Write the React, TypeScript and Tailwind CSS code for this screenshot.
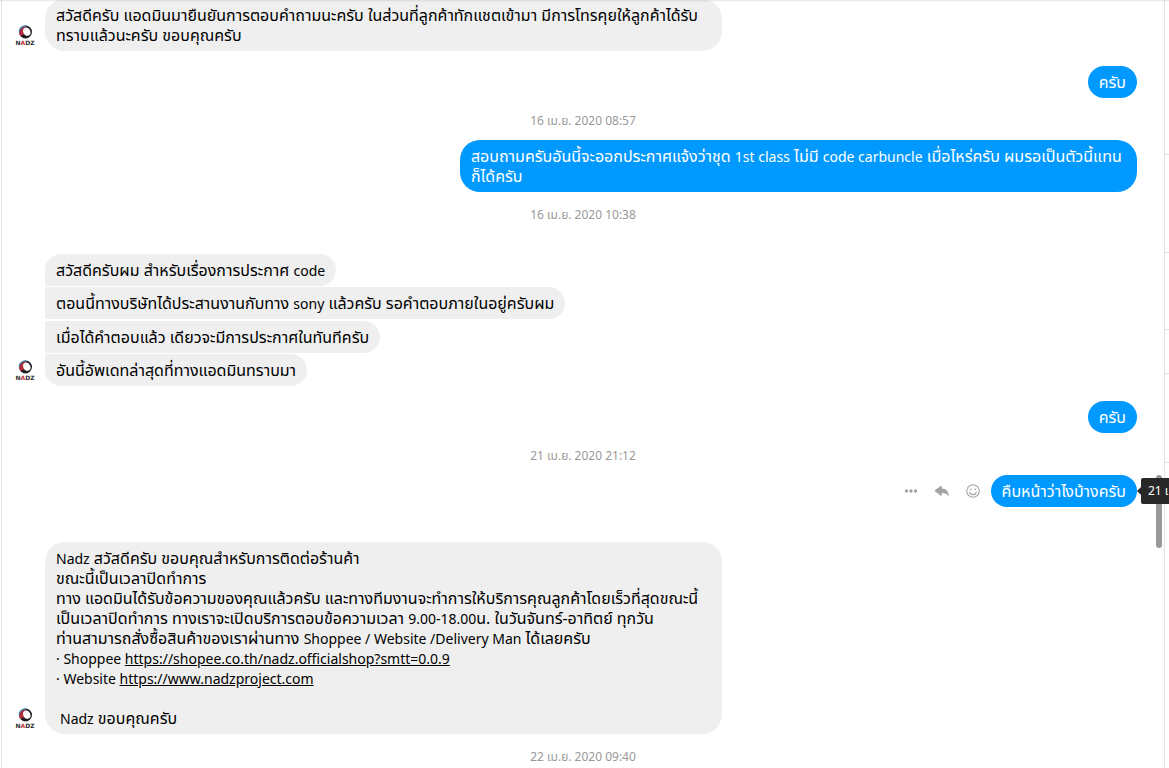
import type { ReactNode } from "react";
import clsx from "clsx";

function Avatar() {
    return (
        <div className="flex w-[43px] shrink-0 justify-center self-end pb-1 pl-[3px]" title="Nadz">
            <svg viewBox="0 0 28 28" className="size-7" role="img" aria-label="Nadz">
                <circle cx="14.5" cy="13" r="6.5" fill="#1d1d22" />
                <path d="M15.5 6.5A6.5 6.5 0 0 0 8 14.5L14.5 13z" fill="#3b7fa8" />
                <path d="M15 7.8A6 6 0 0 0 9.4 17L16 14z" fill="#b52b3a" />
                <ellipse cx="15.8" cy="12.7" rx="3.5" ry="4.3" transform="rotate(-25 15.8 12.7)" fill="#fff" />
                <text x="14" y="26" textAnchor="middle" fontSize="6" fontWeight="700" fontFamily="DejaVu Sans, sans-serif" fill="#2a2a2e">
                    N<tspan fill="#c5303c">A</tspan>DZ
                </text>
            </svg>
        </div>
    );
}

// Latin runs are set a size smaller than the Thai around them
function Latin({ children }: { children: ReactNode }) {
    return <span className="text-sm leading-none">{children}</span>;
}

function DateLine({ children }: { children: ReactNode }) {
    return <time className="-mr-[27px] block pt-4 pb-3 text-center text-xs leading-[14px] text-[#999]">{children}</time>;
}

function Received({ children }: { children: ReactNode }) {
    return (
        <div className="flex">
            <Avatar />
            <div className="flex min-w-0 grow flex-col items-start gap-px">{children}</div>
        </div>
    );
}

function Bubble({ children, className }: { children: ReactNode; className?: string }) {
    return <div className={clsx("bg-[#efefef] px-[11px] py-1.5 text-black", className)}>{children}</div>;
}

function Sent({ children, className }: { children: ReactNode; className?: string }) {
    return <div className={clsx("rounded-[20px] bg-[#0099ff] px-[11px] py-1.5 text-white", className)}>{children}</div>;
}

function Actions() {
    return (
        <div className="mr-2.5 flex items-center gap-[15px] text-[#a3a3a3]">
            <button type="button" aria-label="More" className="cursor-pointer">
                <svg viewBox="0 0 16 16" className="size-4" fill="currentColor">
                    <circle cx="3.5" cy="8" r="1.7" />
                    <circle cx="8" cy="8" r="1.7" />
                    <circle cx="12.5" cy="8" r="1.7" />
                </svg>
            </button>
            <button type="button" aria-label="Reply" className="cursor-pointer">
                <svg viewBox="0 0 16 16" className="size-4" fill="currentColor">
                    <path d="M.9 7.3 7 2.8c.4-.3.8 0 .8.4v2.2c4 .2 6.7 2.4 7 7.4 0 .4-.4.5-.6.2-1.4-2.1-3.3-2.9-6.4-2.9v2.3c0 .5-.5.7-.8.4L.9 8.3c-.3-.3-.3-.7 0-1z" />
                </svg>
            </button>
            <button type="button" aria-label="React" className="cursor-pointer">
                <svg viewBox="0 0 16 16" className="size-4" fill="none" stroke="currentColor" strokeWidth="1.1">
                    <circle cx="8" cy="8" r="6.3" />
                    <path d="M4.6 9.2c.6 1.7 1.9 2.4 3.4 2.4s2.8-.7 3.4-2.4" strokeLinecap="round" />
                    <circle cx="5.9" cy="6.3" r=".9" fill="currentColor" stroke="none" />
                    <circle cx="10.1" cy="6.3" r=".9" fill="currentColor" stroke="none" />
                </svg>
            </button>
        </div>
    );
}

function SidePanel() {
    return (
        <aside className="w-[5px] shrink-0 border-l border-[#e3e3e3]">
            <div className="h-[155px] border-b border-[#e3e3e3]" />
            <div className="h-[98px] border-b border-[#e3e3e3]" />
            <div className="h-[77px] border-b border-[#e3e3e3]" />
            <div className="h-11 border-b border-[#e3e3e3]" />
            <div className="h-[89px] border-b border-[#e3e3e3]" />
        </aside>
    );
}

export default function App() {
    return (
        <div className="relative flex min-h-screen overflow-hidden bg-white pl-px font-['Noto_Sans','Noto_Sans_Thai',sans-serif] text-base leading-5">
            <div className="absolute inset-x-0 top-0 h-0.5 bg-linear-to-b from-black/10 to-transparent" />

            <main className="min-w-0 grow border-l border-[#e3e3e3] pr-[27px]">
                <Received>
                    <Bubble className="-mt-px w-[62%] rounded-[20px]">
                        สวัสดีครับ แอดมินมายืนยันการตอบคำถามนะครับ ในส่วนที่ลูกค้าทักแชตเข้ามา มีการโทรคุยให้ลูกค้าได้รับ
                        <br />
                        ทราบแล้วนะครับ ขอบคุณครับ
                    </Bubble>
                </Received>

                <div className="mt-[15px] flex justify-end">
                    <Sent>ครับ</Sent>
                </div>

                <DateLine>16 เม.ย. 2020 08:57</DateLine>
                <div className="ml-[43px] flex justify-end">
                    <Sent className="w-[62%] whitespace-nowrap">
                        สอบถามครับอันนี้จะออกประกาศแจ้งว่าชุด <Latin>1st class</Latin> ไม่มี <Latin>code carbuncle</Latin>{" "}
                        เมื่อไหร่ครับ ผมรอเป็นตัวนี้แทน
                        <br />
                        ก็ได้ครับ
                    </Sent>
                </div>

                <DateLine>16 เม.ย. 2020 10:38</DateLine>
                <div className="pt-5">
                    <Received>
                        <Bubble className="rounded-[20px] rounded-bl-xs">
                            สวัสดีครับผม สำหรับเรื่องการประกาศ <Latin>code</Latin>
                        </Bubble>
                        <Bubble className="rounded-r-[20px] rounded-l-xs">
                            ตอนนี้ทางบริษัทได้ประสานงานกับทาง <Latin>sony</Latin> แล้วครับ รอคำตอบภายในอยู่ครับผม
                        </Bubble>
                        <Bubble className="mt-px rounded-r-[20px] rounded-l-xs">เมื่อได้คำตอบแล้ว เดียวจะมีการประกาศในทันทีครับ</Bubble>
                        <Bubble className="rounded-[20px] rounded-tl-xs">อันนี้อัพเดทล่าสุดที่ทางแอดมินทราบมา</Bubble>
                    </Received>
                </div>

                <div className="mt-[15px] flex justify-end">
                    <Sent>ครับ</Sent>
                </div>

                <DateLine>21 เม.ย. 2020 21:12</DateLine>
                <div className="relative flex justify-end">
                    <Actions />
                    <Sent>คืบหน้าว่าไงบ้างครับ</Sent>
                    <div className="absolute top-0 left-full ml-[19px] h-[73px] w-1.5 rounded-full bg-[#999]" />
                    <div
                        role="tooltip"
                        className="absolute top-[3px] left-full ml-1 rounded-xs bg-[#282828] px-[7px] py-[3px] text-xs leading-5 whitespace-nowrap text-white"
                    >
                        <span className="absolute top-[9px] -left-1 border-y-4 border-r-4 border-y-transparent border-r-[#282828]" />
                        21 เม.ย. 2020 21:12
                    </div>
                </div>

                <div className="pt-[35px]">
                    <Received>
                        <Bubble className="w-[62%] rounded-[20px]">
                            <p>
                                <Latin>Nadz</Latin> สวัสดีครับ ขอบคุณสำหรับการติดต่อร้านค้า
                            </p>
                            <p>ขณะนี้เป็นเวลาปิดทำการ</p>
                            <p>ทาง แอดมินได้รับข้อความของคุณแล้วครับ และทางทีมงานจะทำการให้บริการคุณลูกค้าโดยเร็วที่สุดขณะนี้</p>
                            <p>
                                เป็นเวลาปิดทำการ ทางเราจะเปิดบริการตอบข้อความเวลา <Latin>9.00-18.00</Latin>น. ในวันจันทร์-อาทิตย์ ทุกวัน
                            </p>
                            <p>
                                ท่านสามารถสั่งซื้อสินค้าของเราผ่านทาง <Latin>Shoppee / Website /Delivery Man</Latin> ได้เลยครับ
                            </p>
                            <p>
                                <Latin>
                                    · Shoppee{" "}
                                    <a href="https://shopee.co.th/nadz.officialshop?smtt=0.0.9" className="underline">
                                        https://shopee.co.th/nadz.officialshop?smtt=0.0.9
                                    </a>
                                </Latin>
                            </p>
                            <p>
                                <Latin>
                                    · Website{" "}
                                    <a href="https://www.nadzproject.com" className="underline">
                                        https://www.nadzproject.com
                                    </a>
                                </Latin>
                            </p>
                            <p className="pt-5 pl-1">
                                <Latin>Nadz</Latin> ขอบคุณครับ
                            </p>
                        </Bubble>
                    </Received>
                </div>

                <DateLine>22 เม.ย. 2020 09:40</DateLine>
            </main>

            <SidePanel />
        </div>
    );
}
